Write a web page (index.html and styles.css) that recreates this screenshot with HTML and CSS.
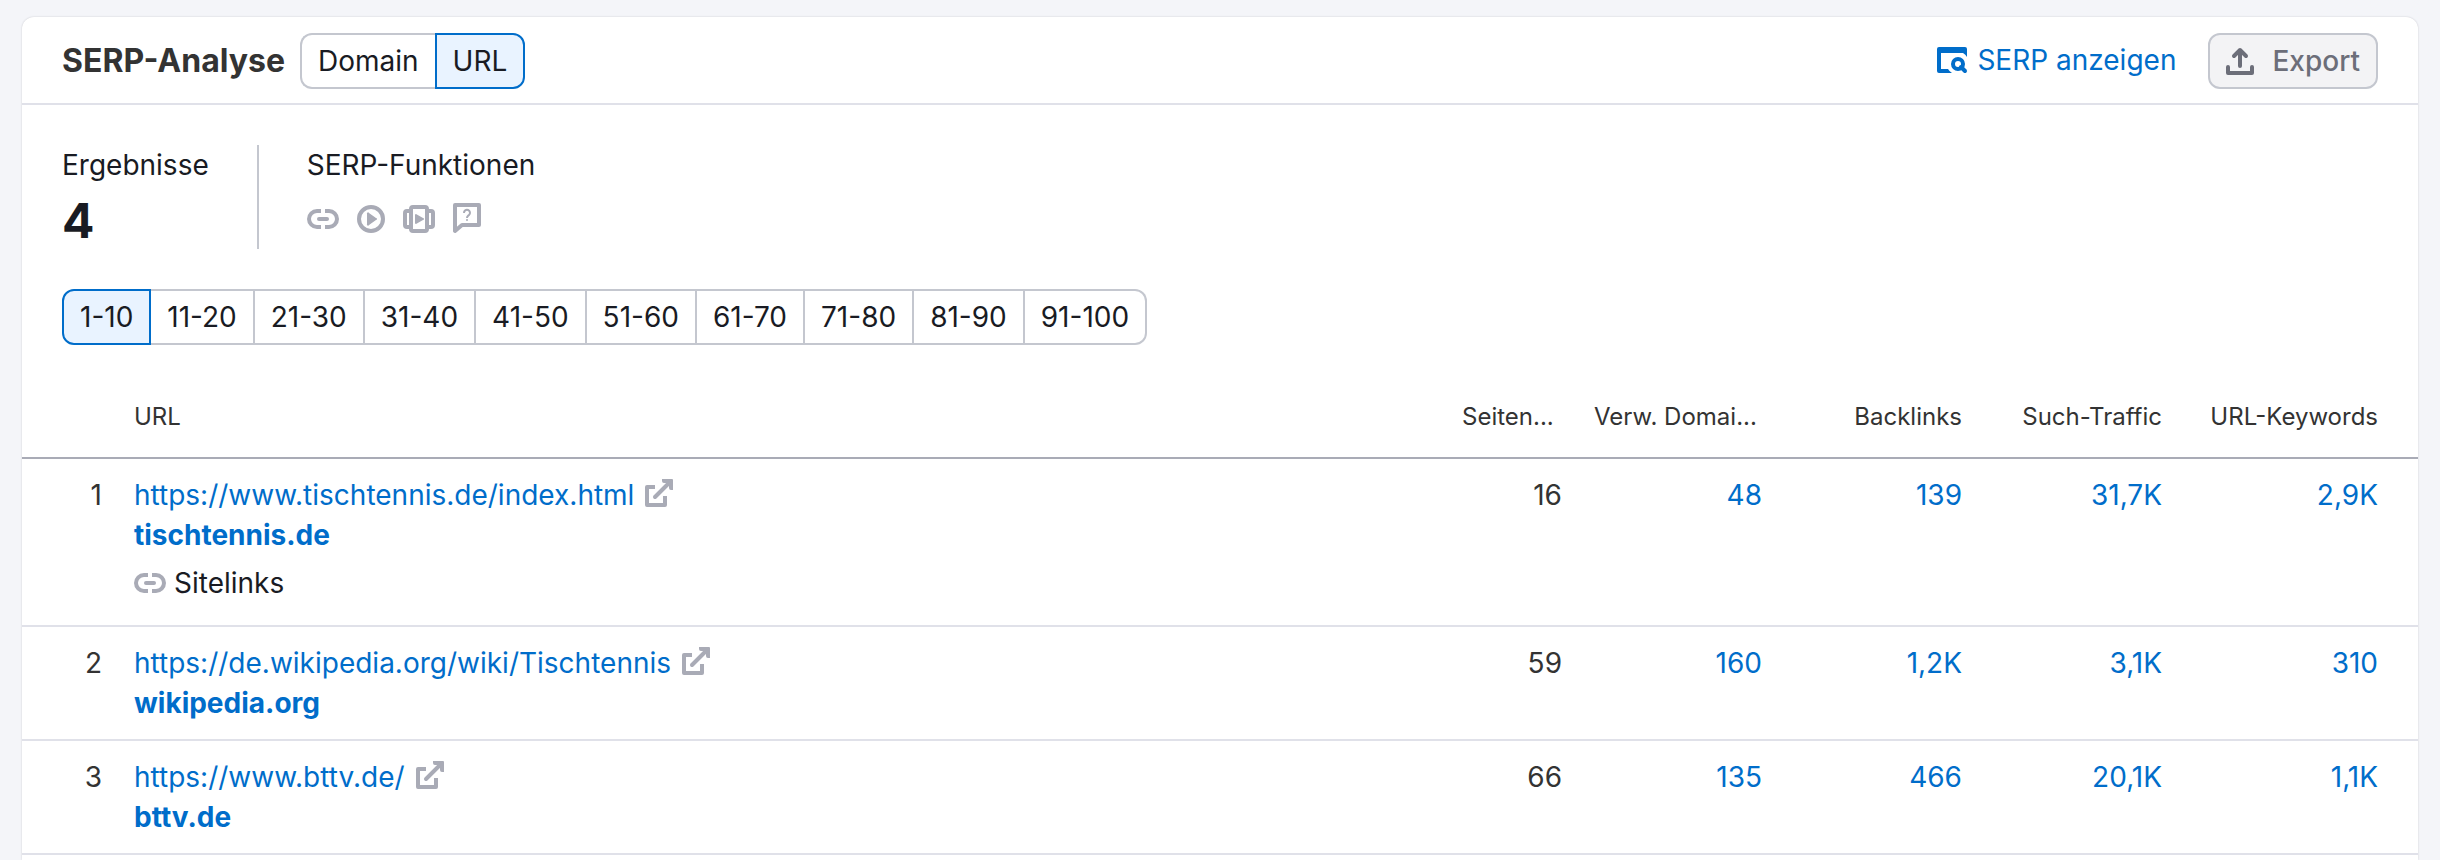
FILE: index.html
```html
<!DOCTYPE html>
<html lang="de">
<head>
  <meta charset="UTF-8">
  <meta name="viewport" content="width=device-width, initial-scale=1.0">
  <title>SERP-Analyse</title>
  <link rel="stylesheet" href="styles.css">
</head>
<body>
  <!-- shared icons -->
  <svg class="sprite" aria-hidden="true">
    <symbol id="icon-link" viewBox="0 0 32 32">
      <path d="M14 8H10a8 8 0 0 0 0 16h4M18 8h4a8 8 0 0 1 0 16h-4" fill="none" stroke="currentColor" stroke-width="4"/>
      <path d="M12 16h8" fill="none" stroke="currentColor" stroke-width="4" stroke-linecap="round"/>
    </symbol>
    <symbol id="icon-external" viewBox="0 0 32 32">
      <path d="M13 8H5v18h18v-9" fill="none" stroke="currentColor" stroke-width="4" stroke-linejoin="round"/>
      <path d="M13 18L27 4" stroke="currentColor" stroke-width="4" stroke-linecap="round"/>
      <path d="M20 0h10a1 1 0 0 1 1 1v10h-2a2 2 0 0 1-2-2V4h-5a2 2 0 0 1-2-2z" fill="currentColor"/>
    </symbol>
  </svg>

  <main class="card">
    <header class="card-header">
      <h1>SERP-Analyse</h1>
      <div class="pills" role="group" aria-label="Ansicht">
        <button type="button">Domain</button>
        <button type="button" class="active" aria-pressed="true">URL</button>
      </div>
      <div class="actions">
        <a href="#" class="serp-link">
          <svg class="icon" viewBox="0 0 32 32" aria-hidden="true">
            <path d="M2 3h26a2 2 0 0 1 2 2v8a10 10 0 0 0-4-4H4v16h7a11 11 0 0 0 4 4H2a2 2 0 0 1-2-2V5a2 2 0 0 1 2-2z" fill="currentColor"/>
            <circle cx="21" cy="20" r="5" fill="none" stroke="currentColor" stroke-width="4"/>
            <path d="M24 23l4 4" stroke="currentColor" stroke-width="4" stroke-linecap="round"/>
          </svg>
          SERP anzeigen
        </a>
        <button type="button" class="export">
          <svg class="icon" viewBox="0 0 32 32" aria-hidden="true">
            <path d="M4 22v6h24v-6" fill="none" stroke="currentColor" stroke-width="4" stroke-linecap="round" stroke-linejoin="round"/>
            <path d="M16 21V5M10 11l6-6 6 6" fill="none" stroke="currentColor" stroke-width="4" stroke-linecap="round" stroke-linejoin="round"/>
          </svg>
          Export
        </button>
      </div>
    </header>

    <section class="summary">
      <div class="results">
        <h2>Ergebnisse</h2>
        <div class="total">4</div>
      </div>
      <div class="features">
        <h2>SERP-Funktionen</h2>
        <div class="feature-icons">
          <svg class="icon" aria-hidden="true"><use href="#icon-link"/></svg>
          <svg class="icon" viewBox="0 0 32 32" aria-hidden="true">
            <circle cx="16" cy="16" r="12" fill="none" stroke="currentColor" stroke-width="4"/>
            <path d="M12 11v10a1 1 0 0 0 2 1l7-5a1 1 0 0 0 0-2l-7-5a1 1 0 0 0-2 1z" fill="currentColor"/>
          </svg>
          <svg class="icon" viewBox="0 0 32 32" aria-hidden="true">
            <path d="M10 4h12a2 2 0 0 1 2 2v20a2 2 0 0 1-2 2H10a2 2 0 0 1-2-2V6a2 2 0 0 1 2-2zM8 8H4a2 2 0 0 0-2 2v12a2 2 0 0 0 2 2h4M24 8h4a2 2 0 0 1 2 2v12a2 2 0 0 1-2 2h-4" fill="none" stroke="currentColor" stroke-width="4"/>
            <path d="M12 12v8a1 1 0 0 0 1 1l7-4a1 1 0 0 0 0-2l-7-4a1 1 0 0 0-1 1z" fill="currentColor"/>
          </svg>
          <svg class="icon" viewBox="0 0 32 32" aria-hidden="true">
            <path d="M4 28V2h24v20H11z" fill="none" stroke="currentColor" stroke-width="4" stroke-linejoin="round"/>
            <path d="M13 10a3 3 0 1 1 5 2c-1 1-2 1-2 3" fill="none" stroke="currentColor" stroke-width="2"/>
            <circle cx="16" cy="17" r="1" fill="currentColor"/>
          </svg>
        </div>
      </div>
    </section>

    <div class="pills ranges" role="group" aria-label="Positionen">
      <button type="button" class="active" aria-pressed="true">1-10</button>
      <button type="button">11-20</button>
      <button type="button">21-30</button>
      <button type="button">31-40</button>
      <button type="button">41-50</button>
      <button type="button">51-60</button>
      <button type="button">61-70</button>
      <button type="button">71-80</button>
      <button type="button">81-90</button>
      <button type="button">91-100</button>
    </div>

    <table>
      <colgroup>
        <col class="col-pos">
        <col>
        <col class="col-score">
        <col class="col-num">
        <col class="col-num">
        <col class="col-num">
        <col class="col-last">
      </colgroup>
      <thead>
        <tr>
          <th></th>
          <th>URL</th>
          <th>Seiten...</th>
          <th>Verw. Domai...</th>
          <th class="num">Backlinks</th>
          <th class="num">Such-Traffic</th>
          <th class="num">URL-Keywords</th>
        </tr>
      </thead>
      <tbody>
        <tr>
          <td class="num">1</td>
          <td>
            <div class="url">
              <a href="#">https://www.tischtennis.de/index.html</a>
              <svg class="icon" aria-hidden="true"><use href="#icon-external"/></svg>
            </div>
            <a href="#" class="domain">tischtennis.de</a>
            <div class="sitelinks">
              <svg class="icon" aria-hidden="true"><use href="#icon-link"/></svg>
              Sitelinks
            </div>
          </td>
          <td class="num">16</td>
          <td class="num"><a href="#">48</a></td>
          <td class="num"><a href="#">139</a></td>
          <td class="num"><a href="#">31,7K</a></td>
          <td class="num"><a href="#">2,9K</a></td>
        </tr>
        <tr>
          <td class="num">2</td>
          <td>
            <div class="url">
              <a href="#">https://de.wikipedia.org/wiki/Tischtennis</a>
              <svg class="icon" aria-hidden="true"><use href="#icon-external"/></svg>
            </div>
            <a href="#" class="domain">wikipedia.org</a>
          </td>
          <td class="num">59</td>
          <td class="num"><a href="#">160</a></td>
          <td class="num"><a href="#">1,2K</a></td>
          <td class="num"><a href="#">3,1K</a></td>
          <td class="num"><a href="#">310</a></td>
        </tr>
        <tr>
          <td class="num">3</td>
          <td>
            <div class="url">
              <a href="#">https://www.bttv.de/</a>
              <svg class="icon" aria-hidden="true"><use href="#icon-external"/></svg>
            </div>
            <a href="#" class="domain">bttv.de</a>
          </td>
          <td class="num">66</td>
          <td class="num"><a href="#">135</a></td>
          <td class="num"><a href="#">466</a></td>
          <td class="num"><a href="#">20,1K</a></td>
          <td class="num"><a href="#">1,1K</a></td>
        </tr>
      </tbody>
    </table>
  </main>
</body>
</html>
```
FILE: styles.css
```css
* {
  box-sizing: border-box;
}

body {
  font-family: Inter, "Liberation Sans", sans-serif;
  font-size: 28px;
  line-height: 40px;
  color: #191b23;
  background: #f4f5f9;
  margin: 0;
  padding: 17px 22px 0;
  min-height: 100vh;
  display: flex;
  flex-direction: column;
}

h1, h2 {
  margin: 0;
}

a {
  color: #006dca;
  text-decoration: none;
}

a:hover {
  text-decoration: underline;
}

button {
  font: inherit;
  cursor: pointer;
}

.sprite {
  display: none;
}

.icon {
  display: block;
  width: 32px;
  height: 32px;
  flex: none;
  color: #a9abb6;
}

.card {
  flex: 1;
  background: white;
  border-radius: 12px 12px 0 0;
  box-shadow: 0 0 2px rgba(25, 27, 35, 0.2);
}

.card-header {
  display: flex;
  align-items: center;
  padding: 16px 40px 14px;
  border-bottom: 2px solid #e0e1e9;
}

.card-header h1 {
  font-size: 32px;
  font-weight: 700;
  color: #333;
  margin-right: 15px;
}

/* button groups */
.pills {
  display: flex;
}

.pills button {
  height: 56px;
  padding: 0 16px;
  color: #191b23;
  background: white;
  border: 2px solid #c4c7cf;
  border-left-width: 0;
}

.pills button:first-child {
  border-left-width: 2px;
  border-radius: 12px 0 0 12px;
}

.pills button:last-child {
  border-radius: 0 12px 12px 0;
}

.pills .active {
  background: #e9f3ff;
  border-color: #006dca;
}

.pills button:has(+ .active) {
  border-right-width: 0;
}

.pills .active:last-child {
  border-left-width: 2px;
}

.actions {
  display: flex;
  align-items: center;
  gap: 32px;
  margin-left: auto;
}

.serp-link {
  display: flex;
  align-items: center;
  gap: 8px;
  padding-bottom: 2px;
}

.serp-link .icon,
.export .icon {
  color: inherit;
}

.export {
  display: flex;
  align-items: center;
  gap: 16px;
  height: 56px;
  padding: 0 16px 0 14px;
  font-weight: 500;
  color: #6c6e79;
  background: #f3f3f5;
  border: 2px solid #c4c7cf;
  border-radius: 12px;
}

.summary {
  display: flex;
  padding: 40px 40px 0;
}

.summary h2 {
  font-size: 28px;
  font-weight: 400;
}

.results {
  padding-right: 48px;
  border-right: 2px solid #c4c7cf;
}

.total {
  margin-top: 8px;
  font-size: 48px;
  font-weight: 700;
  line-height: 56px;
}

.features {
  padding-left: 48px;
}

.feature-icons {
  display: flex;
  gap: 16px;
  margin-top: 18px;
}

.ranges {
  padding: 40px 40px 32px;
}

/* results table */
table {
  width: 100%;
  table-layout: fixed;
  border-collapse: separate;
  border-spacing: 0;
  color: #333;
}

.col-pos {
  width: 96px;
}

.col-score {
  width: 132px;
}

.col-num {
  width: 200px;
}

.col-last {
  width: 240px;
}

th {
  height: 82px;
  padding: 0 16px;
  font-size: 24px;
  font-weight: 400;
  text-align: left;
  white-space: nowrap;
  border-bottom: 2px solid #a9abb6;
}

td {
  padding: 16px;
  vertical-align: top;
  border-bottom: 2px solid #e0e1e9;
}

th:last-child,
td:last-child {
  padding-right: 40px;
}

.num {
  text-align: right;
}

.url {
  display: flex;
  align-items: center;
  gap: 8px;
}

.domain {
  display: block;
  font-weight: 700;
}

.sitelinks {
  display: flex;
  align-items: center;
  gap: 8px;
  margin: 8px 0 6px;
  color: #191b23;
}
```
